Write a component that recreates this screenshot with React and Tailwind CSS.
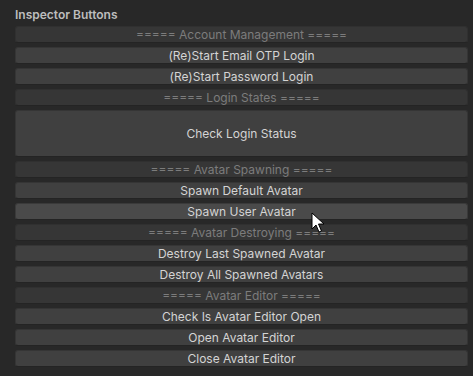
import React from "react";

const rows = [
  { t: "===== Account Management =====", h: true },
  { t: "(Re)Start Email OTP Login" },
  { t: "(Re)Start Password Login" },
  { t: "===== Login States =====", h: true },
  { t: "Check Login Status", big: true },
  { t: "===== Avatar Spawning =====", h: true },
  { t: "Spawn Default Avatar" },
  { t: "Spawn User Avatar", hover: true },
  { t: "===== Avatar Destroying =====", h: true },
  { t: "Destroy Last Spawned Avatar" },
  { t: "Destroy All Spawned Avatars" },
  { t: "===== Avatar Editor =====", h: true },
  { t: "Check Is Avatar Editor Open" },
  { t: "Open Avatar Editor" },
  { t: "Close Avatar Editor" },
];

export default function App() {
  return (
    <div
      className="relative w-[473px] h-[376px] bg-[#282828] overflow-hidden"
      style={{ fontFamily: "Inter, 'Noto Sans', sans-serif" }}
    >
      <div className="pl-[15px] pr-[5px] pt-[7px]">
        <div className="text-[12px] leading-[15px] font-semibold text-[#bdbdbd] h-[19px]">
          Inspector Buttons
        </div>
        <div className="flex flex-col gap-[4px]">
          {rows.map((r, i) => {
            const cls = r.h
              ? "bg-[#363636] text-[#7c7c7c] border-[#303030] border-b-[#242424]"
              : r.hover
              ? "bg-[#4a4a4a] text-[#d4d4d4] border-[#3a3a3a] border-b-[#242424]"
              : "bg-[#404040] text-[#d4d4d4] border-[#353535] border-b-[#242424]";
            return (
              <div
                key={i}
                className={`${cls} ${r.big ? "h-[47px]" : "h-[17px]"} border rounded-[3px] flex items-center justify-center text-[12px] leading-none`}
              >
                {r.t}
              </div>
            );
          })}
        </div>
      </div>
      <svg
        className="absolute left-[311px] top-[212px]"
        width="14"
        height="22"
        viewBox="0 0 14 22"
      >
        <path
          d="M1 1 L1 17 L5 13 L8 20 L10.5 19 L7.5 12 L13 12 Z"
          fill="#ffffff"
          stroke="#000000"
          strokeWidth="1"
          strokeLinejoin="round"
        />
      </svg>
    </div>
  );
}
